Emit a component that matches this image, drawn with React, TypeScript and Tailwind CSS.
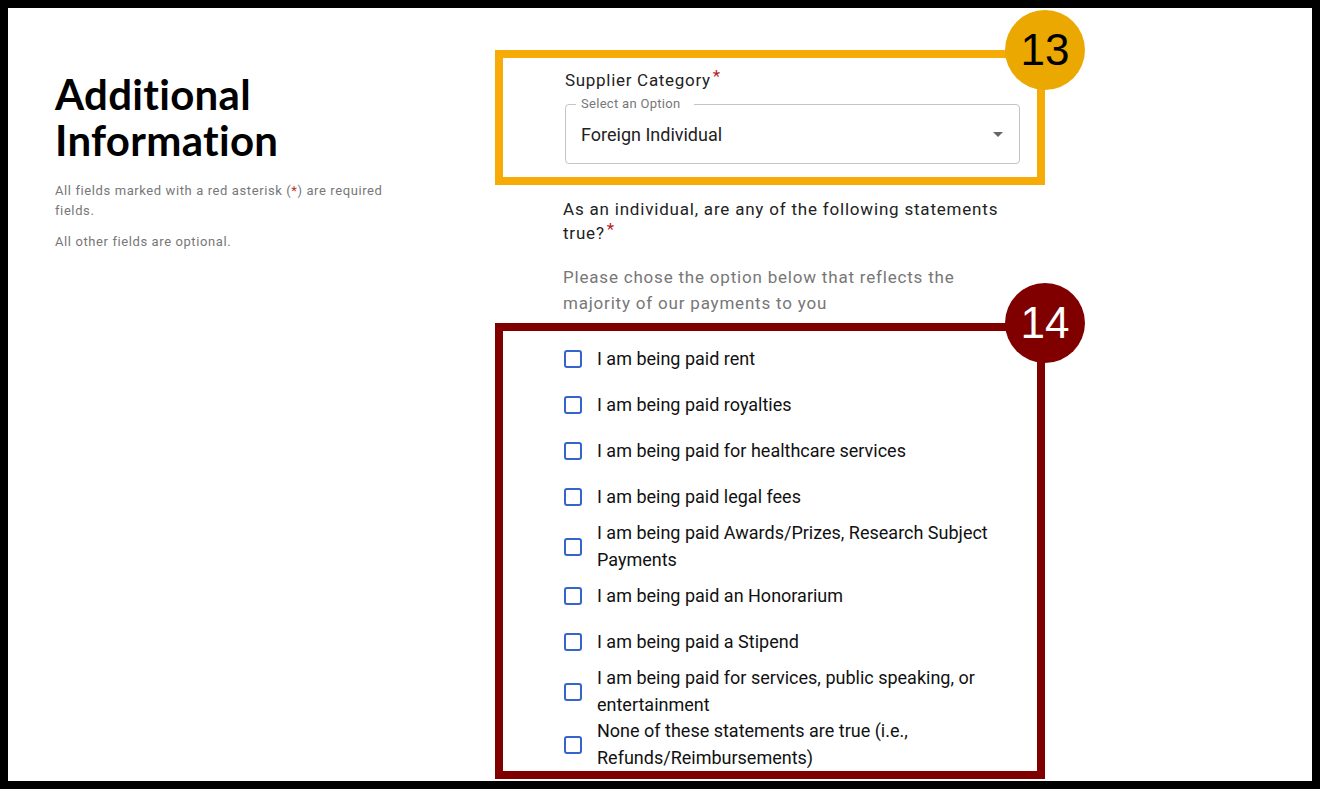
import React from 'react';

const options = [
  { label: 'I am being paid rent' },
  { label: 'I am being paid royalties' },
  { label: 'I am being paid for healthcare services' },
  { label: 'I am being paid legal fees' },
  { label: 'I am being paid Awards/Prizes, Research Subject Payments' },
  { label: 'I am being paid an Honorarium' },
  { label: 'I am being paid a Stipend' },
  { label: 'I am being paid for services, public speaking, or entertainment' },
  { label: 'None of these statements are true (i.e., Refunds/Reimbursements)' },
];

function Badge({ n, className }: { n: string; className: string }) {
  return (
    <div
      className={`absolute -right-[48px] -top-[48px] w-20 h-20 rounded-full flex items-center justify-center text-[44px] leading-none font-['Liberation_Sans',Arial,sans-serif] ${className}`}
    >
      {n}
    </div>
  );
}

export default function App() {
  return (
    <div className="w-[1320px] h-[789px] bg-black p-2">
      <div className="h-full bg-white overflow-hidden flex font-['Roboto',sans-serif]">
        {/* Left intro */}
        <div className="w-[487px] shrink-0 pl-[47px] pt-[63px]">
          <h1 className="font-['Lato',sans-serif] font-bold text-[42px] leading-[46px] tracking-[0.3px] text-black [font-variant-ligatures:none]">
            Additional
            <br />
            Information
          </h1>
          <p className="mt-[18px] w-[350px] text-[13px] leading-[20px] tracking-[0.6px] text-[#777]">
            All fields marked with a red asterisk (<span className="text-[#c62828]">*</span>) are required fields.
          </p>
          <p className="mt-[11px] text-[13px] leading-[20px] tracking-[0.6px] text-[#777]">
            All other fields are optional.
          </p>
        </div>

        {/* Form */}
        <div className="pt-[42px] w-[550px]">
          <div className="relative border-8 border-[#F6AB06] pl-[62px] pr-[17px] pt-[10px] pb-[13px]">
            <Badge n="13" className="bg-[#EAA800] text-black" />
            <div className="text-[17px] leading-[24px] tracking-[0.7px] text-[#222]">
              Supplier Category<span className="text-[#b71c1c] relative -top-[4px] ml-[2px]">*</span>
            </div>
            <div className="relative mt-[12px] h-[60px] border border-[#c4c4c4] rounded-[4px] flex items-center pl-[15px] pr-[9px]">
              <span className="absolute -top-[9px] left-[10px] bg-white pl-[5px] pr-[14px] text-[13px] leading-[16px] tracking-[0.3px] text-[#777]">
                Select an Option
              </span>
              <span className="flex-1 text-[18px] text-[#222]">Foreign Individual</span>
              <svg width="24" height="24" viewBox="0 0 24 24" className="fill-[#666]">
                <path d="M7 10l5 5 5-5z" />
              </svg>
            </div>
          </div>

          <div className="pl-[68px] pr-[40px]">
            <p className="mt-[12px] text-[17px] leading-[24px] tracking-[0.8px] text-[#222]">
              As an individual, are any of the following statements true?
              <span className="text-[#b71c1c] relative -top-[4px] ml-[2px]">*</span>
            </p>
            <p className="mt-[19px] text-[17px] leading-[26px] tracking-[0.8px] text-[#777] pr-[20px]">
              Please chose the option below that reflects the majority of our payments to you
            </p>
          </div>

          <div className="relative mt-[7px] border-8 border-[#800000] pl-[61px] pr-[17px] pt-[5px]">
            <Badge n="14" className="bg-[#800000] text-white" />
            {options.map((o) => (
              <label key={o.label} className="flex items-center min-h-[46px] gap-[15px]">
                <span className="w-[18px] h-[18px] shrink-0 border-2 border-[#3565CC] rounded-[3px]" />
                <span className="text-[18px] leading-[26.5px] text-[#111]">{o.label}</span>
              </label>
            ))}
          </div>
        </div>
      </div>
    </div>
  );
}
